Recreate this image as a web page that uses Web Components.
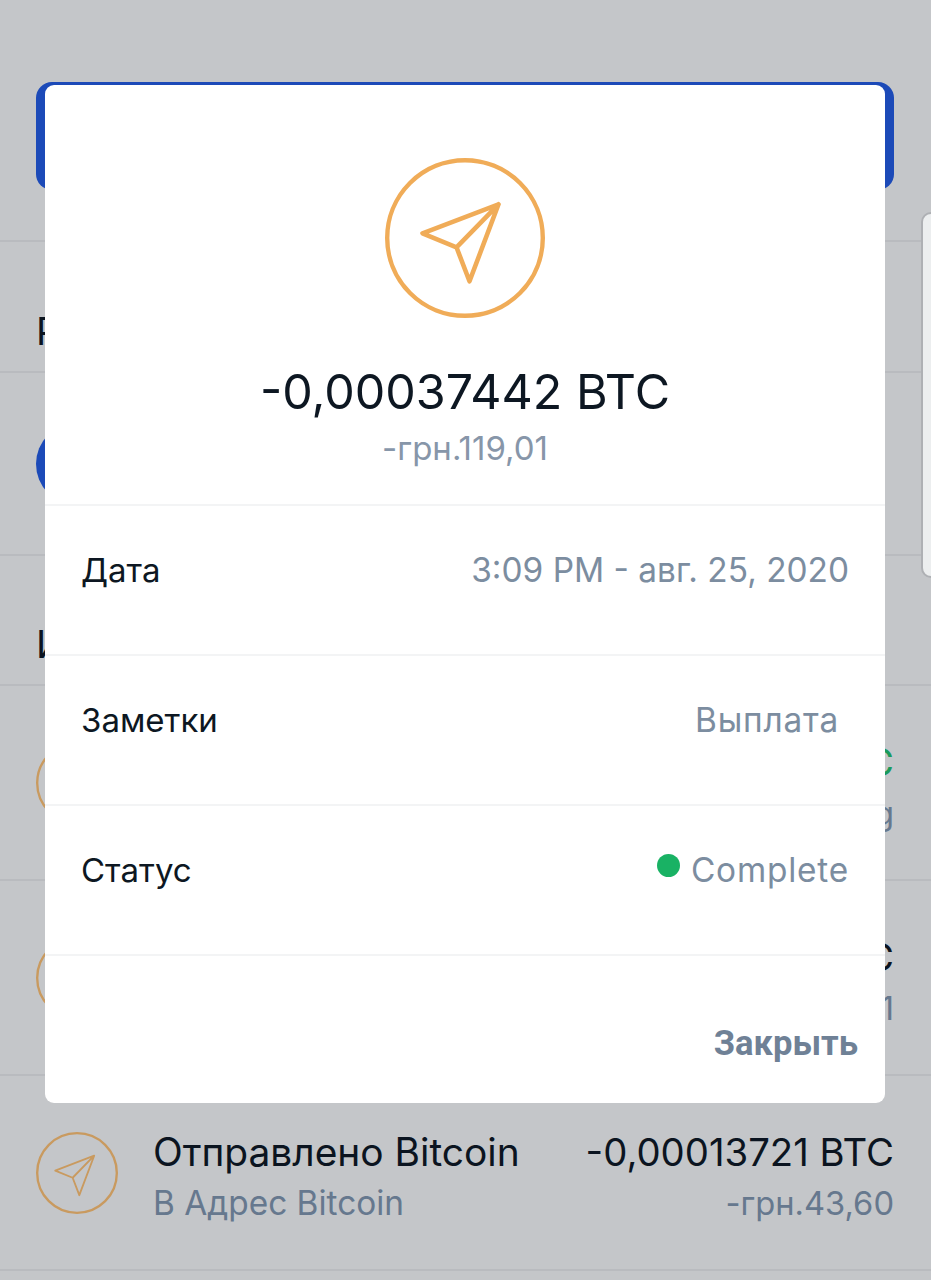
<!DOCTYPE html>
<html lang="ru">
<head>
<meta charset="utf-8">
<title>Bitcoin</title>
<style>
  html, body { margin: 0; padding: 0; background: #c4c6c9; }
  body { font-family: "Inter", "Liberation Sans", sans-serif; }
</style>
</head>
<body>

<wallet-page>
  <bg-row height="131" style="--row-align:start"><span style="font-size:38px;line-height:38px;padding-top:70px;display:block">Р</span></bg-row>
  <bg-row height="183"><tx-icon tone="blue" size="82"></tx-icon></bg-row>
  <bg-row height="130" style="--row-align:start"><span style="font-size:38px;line-height:38px;padding-top:69px;display:block">И</span></bg-row>
  <tx-item amount="C" fiat="g" tone="in"></tx-item>
  <tx-item amount="C" fiat="1"></tx-item>
  <tx-item title="Отправлено Bitcoin" sub="В Адрес Bitcoin" amount="-0,00013721 BTC" fiat="-грн.43,60"></tx-item>

  <tx-modal slot="modal" amount="-0,00037442 BTC" fiat="-грн.119,01">
    <detail-row label="Дата">3:09 PM - авг. 25, 2020</detail-row>
    <detail-row label="Заметки" inset="10" spacing="0.8">Выплата</detail-row>
    <detail-row label="Статус" spacing="0.8"><status-dot></status-dot>Complete</detail-row>
  </tx-modal>
</wallet-page>

<script>
// иконка отправки, координаты общие для большой и маленькой версии
class TxIcon extends HTMLElement {
  connectedCallback() {
    const size = this.getAttribute('size') || 82;
    const tone = this.getAttribute('tone');
    const ring = parseFloat(this.getAttribute('ring')) || 4.6;
    const line = parseFloat(this.getAttribute('line')) || 3.6;
    const color = this.getAttribute('color') || '#c99a5f';
    this.attachShadow({ mode: 'open' });
    if (tone === 'blue') {
      this.shadowRoot.innerHTML = `
        <style>
          :host { display: block; width: ${size}px; height: ${size}px; }
          div { width: 100%; height: 100%; border-radius: 50%; background: #1c4ab8; }
        </style>
        <div></div>`;
      return;
    }
    this.shadowRoot.innerHTML = `
      <style>
        :host { display: block; width: ${size}px; height: ${size}px; flex: none; }
        svg { display: block; width: 100%; height: 100%; overflow: visible; }
      </style>
      <svg viewBox="0 0 160 160" fill="none" stroke="${color}" stroke-linejoin="round" stroke-linecap="round">
        <circle cx="80" cy="80" r="${80 - ring / 2}" stroke-width="${ring}"/>
        <path d="M113.5 46.3 L37.5 75.3 L71.5 89.3 L84.5 123.3 Z M71.5 89.3 L113.5 46.3" stroke-width="${line}"/>
      </svg>`;
  }
}
customElements.define('tx-icon', TxIcon);

class BgRow extends HTMLElement {
  connectedCallback() {
    this.attachShadow({ mode: 'open' });
    this.shadowRoot.innerHTML = `
      <style>
        :host {
          display: flex;
          align-items: var(--row-align, center);
          box-sizing: border-box;
          height: ${this.getAttribute('height')}px;
          border-bottom: 2px solid #b9bbbf;
          color: #0b1420;
          padding: 0 0 0 36px;
        }
      </style>
      <slot></slot>`;
  }
}
customElements.define('bg-row', BgRow);

class TxItem extends HTMLElement {
  connectedCallback() {
    const attr = (name) => this.getAttribute(name) || '';
    const amountColor = attr('tone') === 'in' ? '#1a9a5b' : '#0b1420';
    this.attachShadow({ mode: 'open' });
    this.shadowRoot.innerHTML = `
      <style>
        :host {
          display: flex;
          align-items: center;
          box-sizing: border-box;
          height: 195px;
          padding: 0 37px 0 35.5px;
          border-bottom: 2px solid #b9bbbf;
          gap: 35.5px;
        }
        .text { flex: 1; min-width: 0; padding-top: 10px; }
        .values { text-align: right; padding-top: 10px; }
        .top { font-size: 38.9px; line-height: 50px; height: 51px; color: #0b1420; white-space: nowrap; }
        .bottom { font-size: 33.4px; line-height: 50px; height: 50px; color: #66788e; white-space: nowrap; }
        .amount { color: ${amountColor}; font-size: 38.3px; }
        .fiat { font-size: 32.7px; }
      </style>
      <tx-icon size="82"></tx-icon>
      <div class="text">
        <div class="top">${attr('title')}</div>
        <div class="bottom">${attr('sub')}</div>
      </div>
      <div class="values">
        <div class="top amount">${attr('amount')}</div>
        <div class="bottom fiat">${attr('fiat')}</div>
      </div>`;
  }
}
customElements.define('tx-item', TxItem);

class StatusDot extends HTMLElement {
  constructor() {
    super();
    this.attachShadow({ mode: 'open' }).innerHTML = `
      <style>
        :host {
          display: inline-block;
          width: 23px;
          height: 23px;
          border-radius: 50%;
          background: #19b264;
          margin-right: 11px;
          position: relative;
          top: -5px;
        }
      </style>`;
  }
}
customElements.define('status-dot', StatusDot);

class DetailRow extends HTMLElement {
  connectedCallback() {
    const inset = this.getAttribute('inset') || 0;
    const spacing = this.getAttribute('spacing') || 0;
    this.attachShadow({ mode: 'open' });
    this.shadowRoot.innerHTML = `
      <style>
        :host {
          display: flex;
          justify-content: space-between;
          box-sizing: border-box;
          height: 150px;
          padding: 41px 36px 0;
          border-top: 2px solid #f3f4f5;
          font-size: 33.4px;
          line-height: 46px;
        }
        .label { color: #0d1722; font-size: 33px; }
        .value { color: #7c8da0; padding-right: ${inset}px; white-space: nowrap; letter-spacing: ${spacing}px; }
      </style>
      <div class="label">${this.getAttribute('label')}</div>
      <div class="value"><slot></slot></div>`;
  }
}
customElements.define('detail-row', DetailRow);

class TxModal extends HTMLElement {
  connectedCallback() {
    this.attachShadow({ mode: 'open' });
    this.shadowRoot.innerHTML = `
      <style>
        :host {
          display: block;
          position: absolute;
          left: 45px;
          top: 85px;
          width: 840px;
          height: 1018px;
          background: #fff;
          border-radius: 9px;
        }
        header {
          display: flex;
          flex-direction: column;
          align-items: center;
          height: 419px;
          box-sizing: border-box;
          padding-top: 73px;
        }
        .amount { margin-top: 44px; font-size: 48.4px; line-height: 60px; color: #0d1722; }
        .fiat { margin-top: 3px; font-size: 33px; line-height: 46px; color: #8796a9; }
        footer {
          border-top: 2px solid #f3f4f5;
          display: flex;
          justify-content: flex-end;
          padding: 64px 27px 0;
        }
        .close {
          font-family: "Roboto", "Liberation Sans", sans-serif;
          font-weight: 700;
          font-size: 34.6px;
          line-height: 46px;
          color: #6f8196;
        }
      </style>
      <header>
        <tx-icon size="160" color="#f0ac58" ring="4.4" line="4.6"></tx-icon>
        <div class="amount">${this.getAttribute('amount')}</div>
        <div class="fiat">${this.getAttribute('fiat')}</div>
      </header>
      <slot></slot>
      <footer><div class="close">Закрыть</div></footer>`;
  }
}
customElements.define('tx-modal', TxModal);

class WalletPage extends HTMLElement {
  connectedCallback() {
    this.attachShadow({ mode: 'open' });
    this.shadowRoot.innerHTML = `
      <style>
        :host {
          display: block;
          position: relative;
          width: 931px;
          height: 1280px;
          overflow: hidden;
          background: #c4c6c9;
        }
        .top { height: 242px; box-sizing: border-box; padding: 82px 37px 0 36px; border-bottom: 2px solid #b9bbbf; }
        .banner { height: 108px; background: #1c4ab8; border-radius: 16px; }
        /* край соседней карточки справа */
        .peek {
          position: absolute;
          left: 921px;
          top: 212px;
          width: 30px;
          height: 366px;
          box-sizing: border-box;
          background: #eceeef;
          border: 2px solid #aeb0b4;
          border-radius: 10px;
        }
      </style>
      <div class="top"><div class="banner"></div></div>
      <slot></slot>
      <div class="peek"></div>
      <slot name="modal"></slot>`;
  }
}
customElements.define('wallet-page', WalletPage);
</script>
</body>
</html>
